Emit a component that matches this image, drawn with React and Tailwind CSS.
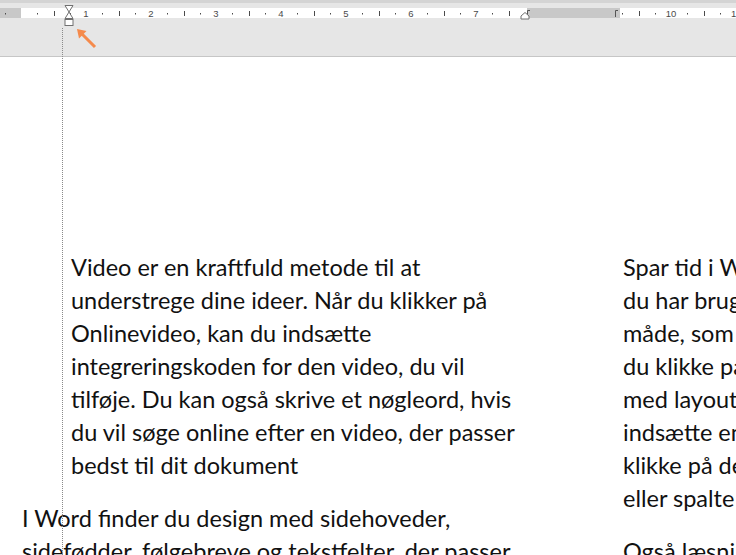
import React from "react";

const ORIGIN = 21;
const STEP = 16.25;

function Ruler() {
  const marks = [];
  for (let k = -1; k <= 44; k++) {
    const x = ORIGIN + STEP * k;
    if (x > 524 && x < 621) continue;
    if (k === 0) continue;
    if (k % 4 === 0) {
      marks.push(
        <text key={k} x={x} y={16.5} textAnchor="middle" fontSize="9.5" fill="#4a4a4a" fontFamily="'Liberation Sans', sans-serif">
          {k / 4}
        </text>
      );
    } else if (Math.abs(k % 4) === 2) {
      marks.push(<rect key={k} x={Math.round(x)} y={11} width={1} height={5} fill="#4a4a4a" />);
    } else {
      marks.push(<rect key={k} x={Math.round(x)} y={13} width={1} height={1.5} fill="#4a4a4a" />);
    }
  }
  return (
    <svg width="736" height="57" className="absolute left-0 top-0">
      <rect x="0" y="8" width="21" height="10" fill="#c8c8c8" />
      <rect x="21" y="8" width="506" height="10" fill="#ffffff" />
      <rect x="527" y="8" width="93" height="10" fill="#c8c8c8" />
      <rect x="620" y="8" width="116" height="10" fill="#ffffff" />
      {marks}
      {/* column markers */}
      <path d="M527.5 17 V10.5 H530" stroke="#555" strokeWidth="1" fill="none" />
      <path d="M615.5 17 V10.5 H618" stroke="#555" strokeWidth="1" fill="none" />
      {/* indent markers */}
      <polygon points="65,5.5 73,5.5 69,12" fill="#fff" stroke="#707070" strokeWidth="1" />
      <polygon points="69,12 65,18.5 73,18.5" fill="#fff" stroke="#707070" strokeWidth="1" />
      <rect x="65" y="19.5" width="8" height="6" fill="#fff" stroke="#707070" strokeWidth="1" />
      <polygon points="525,12.5 529,16 529,19 521,19 521,16" fill="#fff" stroke="#707070" strokeWidth="1" />
      {/* arrow */}
      <line x1="82" y1="34" x2="95" y2="47" stroke="#f58a4b" strokeWidth="3" />
      <polygon points="77,29 86.5,31 79,38.5" fill="#f58a4b" />
    </svg>
  );
}

const left1 = [
  "Video er en kraftfuld metode til at",
  "understrege dine ideer. Når du klikker på",
  "Onlinevideo, kan du indsætte",
  "integreringskoden for den video, du vil",
  "tilføje. Du kan også skrive et nøgleord, hvis",
  "du vil søge online efter en video, der passer",
  "bedst til dit dokument",
];
const left2 = [
  "I Word finder du design med sidehoveder,",
  "sidefødder, følgebreve og tekstfelter, der passer",
];
const right1 = [
  "Spar tid i Word med nye knapper, der",
  "du har brug for dem. Hvis du vil ændre den",
  "måde, som et billede passer ind, skal",
  "du klikke på det, hvorefter der vises en knap",
  "med layoutindstillinger. Du kan",
  "indsætte en række eller kolonne ved at",
  "klikke på det sted i tabellen, hvor du vil",
  "eller spalte",
];
const right2 = ["Også læsning er blevet nemmere i den nye"];

function Para({ lines, className = "" }) {
  return (
    <div className={className}>
      {lines.map((l, i) => (
        <div key={i} className="h-[33px] leading-[33px] whitespace-nowrap">{l}</div>
      ))}
    </div>
  );
}

export default function App() {
  return (
    <div className="relative w-[736px] h-[555px] overflow-hidden bg-white" style={{ fontFamily: "Lato, 'Noto Sans', sans-serif" }}>
      <div className="relative h-[57px] bg-[#e6e6e6] border-b border-[#c6c6c6]">
        <div className="h-[3px] bg-[#d4d4d4]" />
        <Ruler />
      </div>
      <div className="flex pt-[194px] text-[23.5px] text-[#111]">
        <div className="w-[620px] shrink-0 pl-[22px]">
          <Para lines={left1} className="pl-[49px] mb-[20px]" />
          <Para lines={left2} />
        </div>
        <div className="pl-[3px] shrink-0">
          <Para lines={right1} className="mb-[20px]" />
          <Para lines={right2} />
        </div>
      </div>
      <div className="absolute left-[62px] top-[28px] bottom-0 border-l border-dotted border-[#8a8a8a]" />
    </div>
  );
}
